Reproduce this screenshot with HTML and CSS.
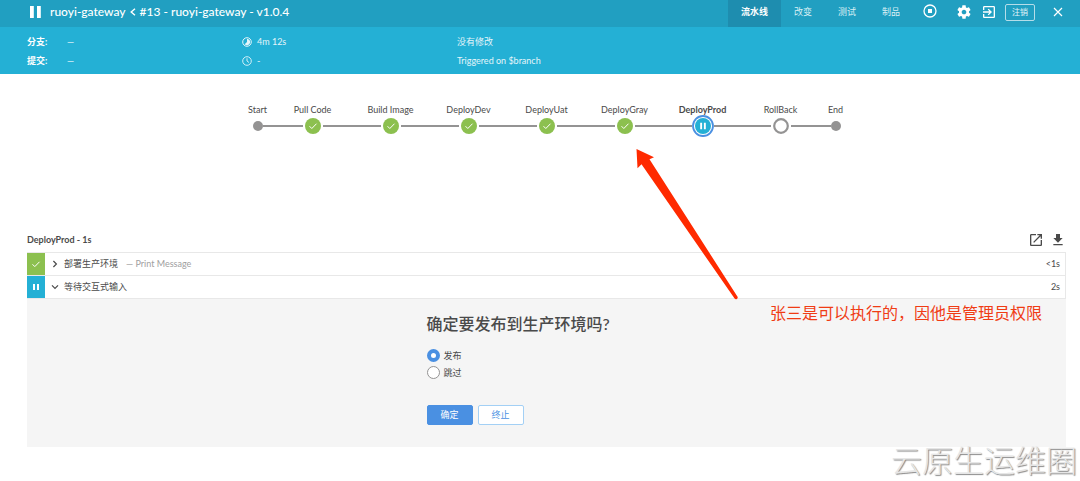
FILE: index.html
```html
<!DOCTYPE html>
<html lang="zh-CN">
<head>
<meta charset="utf-8">
<title>ruoyi-gateway #13</title>
<meta name="viewport" content="width=device-width, initial-scale=1">
<link rel="stylesheet" href="styles.css">
</head>
<body>
<header class="topbar">
  <svg class="status-icon" width="12" height="12" viewBox="0 0 12 12" fill="#fff"><path d="M0 0h3.800v12H0zM7 0h3.800v12H7z"/></svg>
  <h1 class="title">
    <a href="#">ruoyi-gateway</a>
    <svg width="6" height="8" viewBox="0 0 6 8" fill="none" stroke="#fff" stroke-width="1.4"><path d="M5 .7 1.2 4 5 7.3"/></svg>
    <span>#13 - ruoyi-gateway - v1.0.4</span>
  </h1>
  <nav class="tabs">
    <a class="tab tab-active" href="#">流水线</a>
    <a class="tab" href="#">改变</a>
    <a class="tab" href="#">测试</a>
    <a class="tab" href="#">制品</a>
  </nav>
  <div class="tools">
    <button class="icon-button stop" aria-label="停止"><svg width="14" height="14" viewBox="0 0 14 14"><circle cx="7" cy="7" r="6" fill="none" stroke="#fff" stroke-width="1.3"/><rect x="5" y="5" width="4" height="4" fill="#fff"/></svg></button>
    <button class="icon-button gear" aria-label="设置"><svg width="16" height="16" viewBox="0 0 24 24" fill="#fff"><path d="M19.43 12.98c.04-.32.07-.64.07-.98s-.03-.66-.07-.98l2.11-1.65c.19-.15.24-.42.12-.64l-2-3.46c-.12-.22-.39-.3-.61-.22l-2.49 1c-.52-.4-1.08-.73-1.69-.98l-.38-2.65C14.46 2.18 14.25 2 14 2h-4c-.25 0-.46.18-.49.42l-.38 2.65c-.61.25-1.17.59-1.69.98l-2.49-1c-.23-.09-.49 0-.61.22l-2 3.46c-.13.22-.07.49.12.64l2.11 1.65c-.04.32-.07.65-.07.98s.03.66.07.98l-2.11 1.65c-.19.15-.24.42-.12.64l2 3.46c.12.22.39.3.61.22l2.49-1c.52.4 1.08.73 1.69.98l.38 2.65c.03.24.24.42.49.42h4c.25 0 .46-.18.49-.42l.38-2.65c.61-.25 1.17-.59 1.69-.98l2.49 1c.23.09.49 0 .61-.22l2-3.46c.12-.22.07-.49-.12-.64l-2.11-1.65zM12 15.500c-1.930 0-3.500-1.570-3.500-3.500s1.570-3.500 3.500-3.500 3.500 1.570 3.500 3.500-1.570 3.500-3.500 3.500z"/></svg></button>
    <button class="icon-button exit" aria-label="退出"><svg width="16" height="16" viewBox="0 0 24 24" fill="#fff"><path d="M10.09 15.59 11.5 17l5-5-5-5-1.41 1.41L12.67 11H3v2h9.67l-2.58 2.59zM19 3H5c-1.11 0-2 .9-2 2v4h2V5h14v14H5v-4H3v4c0 1.1.89 2 2 2h14c1.1 0 2-.9 2-2V5c0-1.1-.9-2-2-2z"/></svg></button>
    <button class="logout">注销</button>
    <button class="icon-button close" aria-label="关闭"><svg width="10" height="10" viewBox="0 0 10 10" fill="none" stroke="#fff" stroke-width="1.2"><path d="m1 1 8 8M9 1 1 9"/></svg></button>
  </div>
</header>

<section class="summary">
  <dl class="facts">
    <div class="fact"><dt>分支:</dt><dd>—</dd></div>
    <div class="fact"><dt>提交:</dt><dd>—</dd></div>
  </dl>
  <div class="facts">
    <div class="fact timing"><svg width="10" height="10" viewBox="0 0 10 10"><circle cx="5" cy="5" r="4.3" fill="none" stroke="#e4f5fa"/><path d="M5 1.8a3.2 3.2 0 1 1-2.3 5.5L5 5z" fill="#e4f5fa"/></svg><span>4m 12s</span></div>
    <div class="fact timing"><svg width="10" height="10" viewBox="0 0 10 10" fill="none" stroke="#e4f5fa" stroke-width=".9"><circle cx="5" cy="5" r="4.3"/><path d="M5 2.3V5l2 1.5"/></svg><span>-</span></div>
  </div>
  <div class="facts">
    <div class="fact">没有修改</div>
    <div class="fact">Triggered on $branch</div>
  </div>
</section>

<main>
  <ol class="pipeline">
    <li class="stage terminal first"><span class="stage-name">Start</span><span class="track"><i class="dot"></i></span></li>
    <li class="stage"><span class="stage-name">Pull Code</span><span class="track"><svg class="node" width="16" height="16" viewBox="0 0 16 16"><circle cx="8" cy="8" r="8" fill="#8cc04f"/><path d="m4.5 8.2 2.3 2.3 4.7-4.8" fill="none" stroke="#fff"/></svg></span></li>
    <li class="stage"><span class="stage-name">Build Image</span><span class="track"><svg class="node" width="16" height="16" viewBox="0 0 16 16"><circle cx="8" cy="8" r="8" fill="#8cc04f"/><path d="m4.5 8.2 2.3 2.3 4.7-4.8" fill="none" stroke="#fff"/></svg></span></li>
    <li class="stage"><span class="stage-name">DeployDev</span><span class="track"><svg class="node" width="16" height="16" viewBox="0 0 16 16"><circle cx="8" cy="8" r="8" fill="#8cc04f"/><path d="m4.5 8.2 2.3 2.3 4.7-4.8" fill="none" stroke="#fff"/></svg></span></li>
    <li class="stage"><span class="stage-name">DeployUat</span><span class="track"><svg class="node" width="16" height="16" viewBox="0 0 16 16"><circle cx="8" cy="8" r="8" fill="#8cc04f"/><path d="m4.5 8.2 2.3 2.3 4.7-4.8" fill="none" stroke="#fff"/></svg></span></li>
    <li class="stage"><span class="stage-name">DeployGray</span><span class="track"><svg class="node" width="16" height="16" viewBox="0 0 16 16"><circle cx="8" cy="8" r="8" fill="#8cc04f"/><path d="m4.5 8.2 2.3 2.3 4.7-4.8" fill="none" stroke="#fff"/></svg></span></li>
    <li class="stage current"><span class="stage-name">DeployProd</span><span class="track"><svg class="node selected" width="22" height="22" viewBox="0 0 22 22"><circle cx="11" cy="11" r="10" fill="#fff" stroke="#4a90e2" stroke-width="1.8"/><circle cx="11" cy="11" r="8" fill="#24b0d5"/><path d="M8.2 7.8h1.900v6.400H8.200zM11.900 7.800h1.900v6.400h-1.900z" fill="#fff"/></svg></span></li>
    <li class="stage"><span class="stage-name">RollBack</span><span class="track"><svg class="node" width="16" height="16" viewBox="0 0 16 16"><circle cx="8" cy="8" r="6.8" fill="#fff" stroke="#949393" stroke-width="2.2"/></svg></span></li>
    <li class="stage terminal last"><span class="stage-name">End</span><span class="track"><i class="dot"></i></span></li>
  </ol>

  <section class="steps">
    <div class="steps-head">
      <h2>DeployProd - 1s</h2>
      <div class="steps-actions">
        <a href="#" aria-label="在新窗口打开"><svg width="16" height="16" viewBox="0 0 24 24" fill="#4a4a4a"><path d="M19 19H5V5h7V3H5c-1.11 0-2 .9-2 2v14c0 1.1.89 2 2 2h14c1.1 0 2-.9 2-2v-7h-2v7zM14 3v2h3.59l-9.83 9.83 1.41 1.41L19 6.41V10h2V3h-7z"/></svg></a>
        <a href="#" aria-label="下载"><svg width="16" height="16" viewBox="0 0 24 24" fill="#4a4a4a"><path d="M19 9h-4V3H9v6H5l7 7 7-7zM5 18v2h14v-2H5z"/></svg></a>
      </div>
    </div>
    <div class="step">
      <span class="step-status success"><svg width="10" height="10" viewBox="0 0 10 10" fill="none" stroke="#fff"><path d="m1.5 5.3 2.3 2.3 4.7-4.8"/></svg></span>
      <svg class="caret" width="8" height="8" viewBox="0 0 8 8" fill="none" stroke="#4a4a4a" stroke-width="1.2"><path d="m2.4 1 3 3-3 3"/></svg>
      <span class="step-name">部署生产环境</span>
      <span class="step-note">— Print Message</span>
      <span class="step-time">&lt;1s</span>
    </div>
    <div class="step">
      <span class="step-status paused"><svg width="6" height="6" viewBox="0 0 6 6" fill="#fff"><path d="M0 0h2v6H0zM4 0h2v6H4z"/></svg></span>
      <svg class="caret" width="8" height="8" viewBox="0 0 8 8" fill="none" stroke="#4a4a4a" stroke-width="1.2"><path d="m1 2.4 3 3 3-3"/></svg>
      <span class="step-name">等待交互式输入</span>
      <span class="step-time">2s</span>
    </div>
    <form class="prompt">
      <div class="prompt-body">
        <h3>确定要发布到生产环境吗?</h3>
        <label class="choice"><input type="radio" name="action" checked>发布</label>
        <label class="choice"><input type="radio" name="action">跳过</label>
        <div class="buttons">
          <button class="button primary" type="button">确定</button>
          <button class="button secondary" type="button">终止</button>
        </div>
      </div>
    </form>
  </section>
</main>

<svg class="arrow" width="104" height="152" viewBox="636 148 104 152"><path d="M636.5 149 654 157.300 649.500 159.300 737.200 296.300A1.600 1.600 0 0 1 734.600 298.600L641.500 164.300 637.500 168.300Z" fill="#ff2a00"/></svg>
<p class="note">张三是可以执行的，因他是管理员权限</p>
<p class="watermark">云原生运维圈</p>
</body>
</html>
```
FILE: styles.css
```css
* { box-sizing: border-box; }
body, h1, h2, h3, p, dl, dd, ol { margin: 0; padding: 0; }
body {
  position: relative;
  min-height: 100vh;
  background: #fff;
  color: #4a4a4a;
  font-family: Lato, "Noto Sans CJK SC", sans-serif;
  font-size: 9px;
  line-height: 12px;
}
a { color: inherit; text-decoration: none; }
button { font: inherit; padding: 0; cursor: pointer; }
svg { display: block; flex: none; }

.topbar {
  display: flex;
  align-items: center;
  height: 27px;
  padding: 0 17px 0 30px;
  background: #219fc1;
  color: #fff;
}
.title {
  display: flex;
  align-items: center;
  gap: 4px;
  margin-left: 8px;
  font-size: 12px;
  font-weight: 500;
  line-height: 16px;
  padding-bottom: 3px;
}
.status-icon { margin-bottom: 3px; }
.tabs { display: flex; align-self: stretch; margin-left: auto; }
.tab {
  display: flex;
  align-items: center;
  padding: 0 13px 3px;
  color: #d9eff5;
}
.tab-active { background: #1e8daf; color: #fff; font-weight: 700; }
.tools { display: flex; align-items: center; padding-bottom: 3px; margin-left: 10px; }
.icon-button { border: 0; background: none; }
.stop { padding-bottom: 3px; }
.gear { margin-left: 19px; }
.exit { margin-left: 9px; }
.logout {
  width: 30px;
  height: 17px;
  margin-left: 8px;
  border: 1px solid #b5dde9;
  border-radius: 2px;
  background: none;
  color: #e4f5fa;
  font-size: 8px;
}
.close { margin-left: 18px; }

.summary {
  display: flex;
  height: 47px;
  padding: 5px 27px;
  background: #24b0d5;
  color: #e4f5fa;
}
.facts { flex: 0 0 215px; }
.fact { display: flex; align-items: center; height: 19px; }
.fact dt { width: 40px; color: #fff; font-weight: 700; }
.timing { gap: 5px; }

.pipeline {
  display: flex;
  justify-content: center;
  padding: 30px 0 0 13px;
  list-style: none;
}
.stage { width: 78px; }
.terminal { width: 32px; }
.stage-name { display: block; height: 11px; text-align: center; white-space: nowrap; }
.current .stage-name { font-weight: 700; }
.track { display: flex; align-items: center; height: 22px; }
.track::before, .track::after { content: ""; flex: 1; height: 2px; background: #949393; }
.node { margin: 0 2px; }
.node.selected { margin: 0; }
.dot { width: 10px; height: 10px; border-radius: 50%; background: #949393; }
.first .track::before, .last .track::after { background: none; }

.steps { margin: 94px 14px 0 27px; }
.steps-head { display: flex; align-items: center; justify-content: space-between; height: 21px; padding-bottom: 3px; }
.steps-head h2 { font-size: 9px; font-weight: 700; }
.steps-actions { display: flex; gap: 6px; }
.step {
  display: flex;
  align-items: center;
  height: 23px;
  border: 1px solid #e8e8e8;
  border-width: 1px 1px 0 0;
  padding-right: 5px;
}
.step-status {
  display: flex;
  align-items: center;
  justify-content: center;
  align-self: stretch;
  width: 18px;
}
.success { background: #8cc04f; }
.paused { background: #24b0d5; }
.caret { margin: 0 5px 0 6px; }
.step-note { margin-left: 8px; color: #a0a0a0; }
.step-time { margin-left: auto; }

.prompt {
  display: flex;
  justify-content: center;
  height: 149px;
  padding-top: 15px;
  border-top: 1px solid #e8e8e8;
  background: #f5f5f5;
}
.prompt-body { width: 240px; }
.prompt h3 { margin-bottom: 13px; font-size: 16px; font-weight: 500; line-height: 20px; }
.choice { display: flex; align-items: center; gap: 4px; height: 17px; }
.choice input {
  appearance: none;
  width: 13px;
  height: 13px;
  margin: 0;
  border: 1px solid #949393;
  border-radius: 50%;
  background: #fff;
}
.choice input:checked { border: 4px solid #4a90e2; }
.buttons { display: flex; gap: 5px; margin-top: 24px; }
.button { width: 46px; height: 20px; border: 1px solid #4a90e2; border-radius: 2px; }
.primary { background: #4a90e2; color: #fff; }
.secondary { border-color: #a3d0f5; background: #fff; color: #4a90e2; }

.arrow { position: absolute; top: 148px; left: 636px; }
.note {
  position: absolute;
  top: 303px;
  left: 770px;
  color: #f03c14;
  font-size: 16px;
  line-height: 20px;
  white-space: nowrap;
}
.watermark {
  position: absolute;
  top: 440px;
  right: 3px;
  color: #e6e6e6;
  font-size: 31px;
  font-weight: 300;
  line-height: 40px;
  text-shadow: 1px 1px 1px #888;
  white-space: nowrap;
}
```
